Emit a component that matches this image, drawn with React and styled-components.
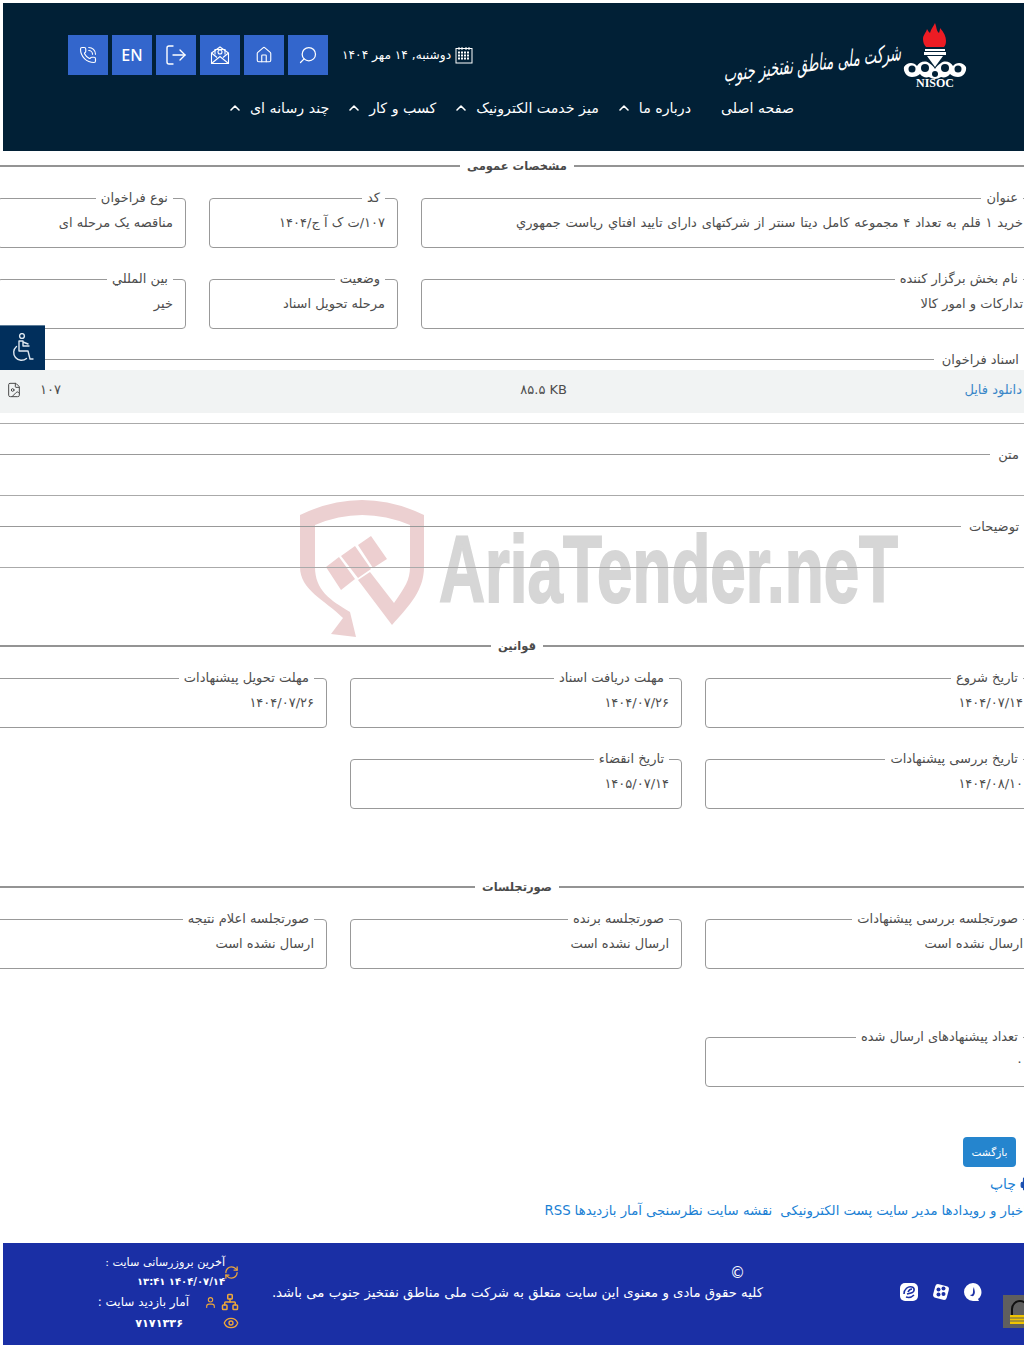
import React from 'react';
import styled, { createGlobalStyle } from 'styled-components';
import {
  ChevronUp,
  Eye,
  FileImage,
  Home,
  LogOut,
  Network,
  PhoneCall,
  Printer,
  RefreshCw,
  Search,
  User
} from 'lucide-react';

const FONT = '"DejaVu Sans", "Noto Sans", sans-serif';
const TEXT = '#4d4d4d';

const GlobalStyle = createGlobalStyle`
  html, body {
    margin: 0;
    padding: 0;
    background: #fff;
    overflow-x: hidden;
  }
  body {
    font-family: ${FONT};
    color: ${TEXT};
  }
  * { box-sizing: border-box; }
`;

const Page = styled.div`
  position: relative;
  width: 1024px;
  height: 1358px;
  padding-top: 3px;
  overflow: hidden;
  direction: rtl;
`;

// ---------- header ----------
const Header = styled.header`
  margin-left: 3px;
  height: 148px;
  background: #012036;
  display: flex;
  flex-direction: column;
`;

const HeaderTop = styled.div`
  height: 83px;
  padding: 20px 57px 0 0;
  display: flex;
  justify-content: space-between;
`;

const Logo = styled.div`
  display: flex;
  align-items: flex-start;
  color: #fff;
`;

const LogoText = styled.span`
  font-family: "DejaVu Sans", sans-serif;
  font-size: 23px;
  font-style: italic;
  line-height: 1;
  margin: 18px 2px 0 0;
  white-space: nowrap;
  display: inline-block;
  width: 178px;
  transform: scaleX(.57) rotate(-4deg);
  transform-origin: right center;
`;

const Tools = styled.div`
  display: flex;
  align-items: flex-start;
  padding: 12px 0 0 65px;
`;

const DateText = styled.div`
  display: flex;
  align-items: center;
  gap: 4px;
  height: 40px;
  margin-left: 14px;
  font-size: 12.2px;
  color: #fff;
  white-space: nowrap;
`;

const ToolButton = styled.a`
  width: 40px;
  height: 40px;
  margin-left: 4px;
  background: #3366cc;
  color: #fff;
  display: flex;
  align-items: center;
  justify-content: center;
  font-size: 16px;
  font-family: "Noto Sans", sans-serif;
  font-weight: 500;
  &:last-child { margin-left: 0; }
`;

const Nav = styled.nav`
  display: flex;
  padding-right: 230px;
  height: 44px;
  align-items: center;
`;

const NavItem = styled.a`
  display: flex;
  align-items: center;
  gap: 7px;
  margin-left: 17px;
  font-size: 14.2px;
  color: #fff;
  white-space: nowrap;
  svg { flex: none; }
  &:first-child { margin-left: 30px; }
`;

// ---------- content ----------
const Main = styled.main`
  position: relative;
  z-index: 1;
  width: 1038px;
  margin-right: -12px;
  padding-top: 7px;
  font-size: 13px;
`;

const SectionTitle = styled.div`
  display: flex;
  align-items: center;
  height: 16px;
  margin-top: ${({ $top }) => $top || 0}px;
  color: #4a4a4a;
  font-size: 11.5px;
  font-weight: 700;
  white-space: nowrap;
  &::before, &::after {
    content: '';
    flex: 1;
    height: 2px;
    background: #949494;
  }
  span { padding: 0 7px; }
`;

const FieldGrid = styled.div`
  display: grid;
  grid-template-columns: ${({ $cols }) => $cols};
  gap: 22px 23px;
  margin-top: ${({ $top }) => $top || 0}px;
`;

const Field = styled.fieldset`
  margin: 0;
  min-width: 0;
  height: 59px;
  padding: 0 12px;
  border: 1px solid #999;
  border-radius: 4px;
  legend {
    margin-right: 0;
    padding: 0 5px;
    font-size: 13px;
    line-height: 18px;
    color: ${TEXT};
    white-space: nowrap;
  }
`;

const FieldValue = styled.div`
  margin-top: 6px;
  font-size: 13px;
  line-height: 20px;
  color: ${TEXT};
  white-space: nowrap;
  word-spacing: ${({ $spread }) => $spread || 0}px;
  direction: ${({ $ltr }) => ($ltr ? 'ltr' : 'rtl')};
  text-align: right;
`;

const LineField = styled.div`
  display: flex;
  align-items: center;
  height: 16px;
  margin-top: ${({ $top }) => $top || 0}px;
  padding-right: 17px;
  color: ${TEXT};
  white-space: nowrap;
  &::after {
    content: '';
    flex: 1;
    height: 1px;
    margin-right: 8px;
    background: #999;
  }
`;

const Rule = styled.div`
  height: 1px;
  margin-top: ${({ $top }) => $top || 0}px;
  background: #aaa;
`;

const DownloadRow = styled.div`
  height: 43px;
  margin-top: 3px;
  padding: 0 14px 4px 0;
  background: #f1f3f3;
  display: grid;
  grid-template-columns: 455px auto 1fr;
  align-items: center;
  color: ${TEXT};
  a { color: #3b87c8; }
`;

const FileSize = styled.span`
  direction: ltr;
`;

const FileCell = styled.div`
  display: flex;
  align-items: center;
  justify-content: flex-end;
  gap: 18px;
  padding-left: 8px;
  color: ${TEXT};
  svg { color: #4a4a4a; }
`;

const BackButton = styled.button`
  display: block;
  width: 53px;
  height: 30px;
  margin: 50px 20px 0 auto;
  padding: 0;
  border: 0;
  border-radius: 4px;
  background: #2585ce;
  color: #fff;
  font-family: ${FONT};
  font-size: 10.5px;
`;

const PrintLink = styled.a`
  display: flex;
  align-items: center;
  gap: 4px;
  height: 18px;
  margin-top: 8px;
  padding-right: 2px;
  color: #1a7fd4;
  font-size: 14px;
  white-space: nowrap;
  svg { color: #1a4fb0; fill: #1a4fb0; }
`;

const LinkRow = styled.div`
  display: flex;
  height: 20px;
  margin-top: 10px;
  padding-right: 9px;
  color: #1a7fd4;
  font-size: 13.3px;
  white-space: nowrap;
  a { margin-left: 4px; }
  a.wide { margin-left: 8px; }
`;

// ---------- footer ----------
const Footer = styled.footer`
  margin: 20px 0 0 3px;
  height: 102px;
  background: #1a2fa5;
  color: #fff;
  display: flex;
  align-items: flex-start;
`;

const Socials = styled.div`
  display: flex;
  gap: 14px;
  padding: 40px 42px 0 0;
  width: 261px;
  flex: none;
`;

const Copyright = styled.div`
  width: 491px;
  flex: none;
  padding-top: 21px;
  font-size: 13.3px;
  line-height: 19px;
  white-space: nowrap;
`;

const CopySign = styled.div`
  margin-right: 18px;
  font-size: 15px;
`;

const Stats = styled.div`
  width: 145px;
  margin-right: 33px;
  padding-top: 10px;
  font-size: 11.2px;
  color: #fff;
  display: flex;
  flex-direction: column;
  svg { color: #eea83a; flex: none; }
`;

const StatRow = styled.div`
  display: flex;
  align-items: center;
  gap: ${({ $gap }) => $gap || 0}px;
  height: ${({ $h }) => $h || 20}px;
  white-space: nowrap;
`;

const StatLines = styled.div`
  margin-right: -1px;
  line-height: 19px;
`;

const StatDate = styled.div`
  direction: ltr;
  text-align: right;
  font-size: 10px;
  font-weight: 700;
`;

const StatNumber = styled.span`
  margin-right: 40px;
  font-weight: 700;
  font-size: 11.2px;
`;

const StatLabel = styled.span`
  margin-right: 11px;
  font-size: 12px;
`;

// ---------- overlays ----------
const AccessWidget = styled.div`
  position: absolute;
  left: 0;
  top: 325px;
  width: 45px;
  height: 45px;
  background: #012f5c;
  border-top: 1px solid #5c7c98;
  color: #dfe8f0;
  display: flex;
  align-items: center;
  justify-content: center;
  z-index: 3;
`;

const LockWidget = styled.div`
  position: absolute;
  left: 1003px;
  top: 1295px;
  width: 40px;
  height: 33px;
  background: #5f5f5f;
  z-index: 3;
`;

const Watermark = styled.svg`
  position: absolute;
  left: 290px;
  top: 495px;
  direction: ltr;
  pointer-events: none;
  z-index: 0;
`;

const NisocMark = () => (
  <svg width="64" height="68" viewBox="0 0 64 68" style={{ flex: 'none' }}>
    <path d="M32 0c2 5 1 7 4 10 1-3 1-4 1-5 4 4 6 9 6 13 0 3-1 5-2 6H23c-2-2-3-5-3-8 0-4 3-6 4-10 1 2 2 3 3 4 1-4 3-6 5-10z" fill="#ed1c24" />
    <rect x="22" y="26" width="20" height="2" fill="#fff" />
    <rect x="21" y="29" width="22" height="3" fill="#fff" />
    <path d="M24 33h16l-8 11z" fill="#fff" />
    <path d="M1 44c3-5 10-5 13-1 2-4 8-6 12-3 3 2 5 4 6 6 1-2 3-4 6-6 4-3 10-1 12 3 3-4 10-4 13 1 1 5-3 10-8 10-3 0-6-1-8-3-2 3-6 4-9 3-2 1-4 2-6 2s-4-1-6-2c-3 1-7 0-9-3-2 2-5 3-8 3-5 0-9-5-8-10z" fill="#fff" />
    <circle cx="9" cy="46" r="3.5" fill="#012036" />
    <circle cx="55" cy="46" r="3.5" fill="#012036" />
    <circle cx="22" cy="45" r="4" fill="#012036" />
    <circle cx="42" cy="45" r="4" fill="#012036" />
    <circle cx="32" cy="51" r="3" fill="#012036" />
    <text x="32" y="64" textAnchor="middle" fill="#fff" fontFamily="Liberation Serif" fontWeight="700" fontSize="12">NISOC</text>
  </svg>
);

const CalendarMark = () => (
  <svg width="18" height="18" viewBox="0 0 18 18" style={{ flex: 'none' }}>
    <rect x="1" y="2.5" width="16" height="14.5" fill="none" stroke="#fff" />
    <path d="M4 1v3M7 1v3M11 1v3M14 1v3" stroke="#fff" />
    <path d="M3 6.5h12M3 9.5h12M3 12.5h12" stroke="#fff" strokeWidth="2" strokeDasharray="2 1" />
  </svg>
);

const MailMark = () => (
  <svg width="20" height="20" viewBox="0 0 20 20" fill="none" stroke="#fff" strokeWidth="1.1">
    <path d="M1.5 8 10 2l8.5 6v10.5h-17z" />
    <path d="M1.5 18.5 10 11.5l8.5 7M1.5 8 7 12.5M18.5 8 13 12.5" />
    <path d="M5 9.5V4.5h10v5" />
    <circle cx="10" cy="7" r="2" />
  </svg>
);

const WheelchairMark = () => (
  <svg width="24" height="30" viewBox="0 0 24 30" fill="none" stroke="currentColor" strokeWidth="1.4" strokeLinecap="round" strokeLinejoin="round">
    <circle cx="11" cy="3" r="2.4" />
    <path d="M8 8h4v5h6M12 9l5 2M8 8v10h9l2 8h3" />
    <path d="M5.5 13.5a7.5 7.5 0 1 0 10 12" />
  </svg>
);

const EitaaIcon = () => (
  <svg width="18" height="18" viewBox="0 0 18 18">
    <rect width="18" height="18" rx="5" fill="#fff" />
    <path d="M4 11c0-5 4-8 8-7 3 1 3 5-1 6l-4 1M6 14c3 1 6 0 8-2M8 9c1-2 2-3 4-3" fill="none" stroke="#1a2fa5" strokeWidth="1.6" />
  </svg>
);

const BaleIcon = () => (
  <svg width="18" height="18" viewBox="0 0 18 18">
    <rect x="2" y="2" width="14" height="14" rx="3" fill="#fff" transform="rotate(15 9 9)" />
    <circle cx="6.5" cy="6.5" r="2" fill="#1a2fa5" />
    <circle cx="11.5" cy="5.5" r="2" fill="#1a2fa5" />
    <circle cx="6.5" cy="11.5" r="2" fill="#1a2fa5" />
    <circle cx="11.5" cy="11" r="2" fill="#1a2fa5" />
  </svg>
);

const SoroushIcon = () => (
  <svg width="18" height="18" viewBox="0 0 18 18">
    <path d="M9 0a9 9 0 1 0 0 18h6l-1-2a9 9 0 0 0-5-16z" fill="#fff" />
    <path d="M10 4c0 3 2 5 0 8-1 2-3 1-4 0 2 0 3-1 3-3s0-3 1-5z" fill="#1a2fa5" />
  </svg>
);

const Chevron = () => <ChevronUp size={16} strokeWidth={2.4} />;

const App = () => (
  <Page>
    <GlobalStyle />
    <Watermark width="620" height="150" viewBox="0 0 620 150">
      <path
        d="M10 20Q72 -10 134 20V72C134 95 120 110 102 130L68 85L80 77L104 108C115 92 120 85 120 72V30Q72 10 25 30V72C25 95 40 105 60 117L66 142L41 139L53 123C35 105 10 95 10 72Z"
        fill="#ecd0d1"
      />
      <path d="M36 72 49 62 65 84 51 95zM51 61 65 51 81 74 68 83zM68 50 81 41 97 64 83 73z" fill="#edcfd0" />
      <text x="149" y="107" fontFamily="Liberation Sans" fontWeight="700" fontSize="95" fill="#d6d6d6" stroke="#d6d6d6" strokeWidth="2" textLength="459" lengthAdjust="spacingAndGlyphs">AriaTender.neT</text>
    </Watermark>

    <Header>
      <HeaderTop>
        <Logo>
          <NisocMark />
          <LogoText>شرکت ملی مناطق نفتخیز جنوب</LogoText>
        </Logo>
        <Tools>
          <DateText>
            <CalendarMark />
            دوشنبه, ۱۴ مهر ۱۴۰۴
          </DateText>
          <ToolButton><Search size={20} strokeWidth={1.5} style={{ transform: 'scaleX(-1)' }} /></ToolButton>
          <ToolButton><Home size={18} strokeWidth={1.5} /></ToolButton>
          <ToolButton><MailMark /></ToolButton>
          <ToolButton><LogOut size={24} strokeWidth={1.4} /></ToolButton>
          <ToolButton>EN</ToolButton>
          <ToolButton><PhoneCall size={18} strokeWidth={1.5} /></ToolButton>
        </Tools>
      </HeaderTop>
      <Nav>
        <NavItem>صفحه اصلی</NavItem>
        <NavItem>درباره ما <Chevron /></NavItem>
        <NavItem>میز خدمت الکترونیک <Chevron /></NavItem>
        <NavItem>کسب و کار <Chevron /></NavItem>
        <NavItem>چند رسانه ای <Chevron /></NavItem>
      </Nav>
    </Header>

    <Main>
      <SectionTitle><span>مشخصات عمومی</span></SectionTitle>
      <FieldGrid $cols="615px 189px 189px" $top={15}>
        <Field>
          <legend>عنوان</legend>
          <FieldValue $spread={0.7}>خرید ۱ قلم به تعداد ۴ مجموعه کامل دیتا سنتر از شرکتهای دارای تایید افتاي ریاست جمهوري</FieldValue>
        </Field>
        <Field>
          <legend>کد</legend>
          <FieldValue>۱۰۷/ت ک آ ج/۱۴۰۴</FieldValue>
        </Field>
        <Field>
          <legend>نوع فراخوان</legend>
          <FieldValue>مناقصه یک مرحله ای</FieldValue>
        </Field>
        <Field>
          <legend>نام بخش برگزار کننده</legend>
          <FieldValue>تدارکات و امور کالا</FieldValue>
        </Field>
        <Field>
          <legend>وضعیت</legend>
          <FieldValue>مرحله تحویل اسناد</FieldValue>
        </Field>
        <Field>
          <legend>بین المللي</legend>
          <FieldValue>خیر</FieldValue>
        </Field>
      </FieldGrid>

      <LineField $top={22}>اسناد فراخوان</LineField>
      <DownloadRow>
        <a>دانلود فایل</a>
        <FileSize>۸۵.۵ KB</FileSize>
        <FileCell><span>۱۰۷</span><FileImage size={16} strokeWidth={1.5} /></FileCell>
      </DownloadRow>
      <Rule $top={10} />
      <LineField $top={22}>متن</LineField>
      <Rule $top={33} />
      <LineField $top={22}>توضیحات</LineField>
      <Rule $top={33} />

      <SectionTitle $top={70}><span>قوانین</span></SectionTitle>
      <FieldGrid $cols="331px 332px 332px" $top={15}>
        <Field>
          <legend>تاریخ شروع</legend>
          <FieldValue $ltr>۱۴۰۴/۰۷/۱۴</FieldValue>
        </Field>
        <Field>
          <legend>مهلت دریافت اسناد</legend>
          <FieldValue $ltr>۱۴۰۴/۰۷/۲۶</FieldValue>
        </Field>
        <Field>
          <legend>مهلت تحویل پیشنهادات</legend>
          <FieldValue $ltr>۱۴۰۴/۰۷/۲۶</FieldValue>
        </Field>
        <Field>
          <legend>تاریخ بررسی پیشنهادات</legend>
          <FieldValue $ltr>۱۴۰۴/۰۸/۱۰</FieldValue>
        </Field>
        <Field>
          <legend>تاریخ انقضاء</legend>
          <FieldValue $ltr>۱۴۰۵/۰۷/۱۴</FieldValue>
        </Field>
      </FieldGrid>

      <SectionTitle $top={70}><span>صورتجلسات</span></SectionTitle>
      <FieldGrid $cols="331px 332px 332px" $top={15}>
        <Field>
          <legend>صورتجلسه بررسی پیشنهادات</legend>
          <FieldValue>ارسال نشده است</FieldValue>
        </Field>
        <Field>
          <legend>صورتجلسه برنده</legend>
          <FieldValue>ارسال نشده است</FieldValue>
        </Field>
        <Field>
          <legend>صورتجلسه اعلام نتیجه</legend>
          <FieldValue>ارسال نشده است</FieldValue>
        </Field>
      </FieldGrid>
      <FieldGrid $cols="331px" $top={59}>
        <Field>
          <legend>تعداد پیشنهادهای ارسال شده</legend>
          <FieldValue>۰</FieldValue>
        </Field>
      </FieldGrid>

      <BackButton>بازگشت</BackButton>
      <PrintLink><Printer size={14} />چاپ</PrintLink>
      <LinkRow>
        <a>اخبار و رویدادها</a><a>مدیر سایت</a><a className="wide">پست الکترونیکی</a>
        <a>نقشه سایت</a><a>نظرسنجی</a><a>آمار بازدیدها</a><a>RSS</a>
      </LinkRow>
    </Main>

    <Footer>
      <Socials>
        <SoroushIcon /><BaleIcon /><EitaaIcon />
      </Socials>
      <Copyright>
        <CopySign>©</CopySign>
        کلیه حقوق مادی و معنوی این سایت متعلق به شرکت ملی مناطق نفتخیز جنوب می باشد.
      </Copyright>
      <Stats>
        <StatRow $h={38}>
          <RefreshCw size={15} strokeWidth={2} />
          <StatLines>
            <div>آخرین بروزرسانی سایت :</div>
            <StatDate>۱۳:۴۱ ۱۴۰۴/۰۷/۱۴</StatDate>
          </StatLines>
        </StatRow>
        <StatRow $h={22} $gap={4}>
          <Network size={18} strokeWidth={2} />
          <User size={13} strokeWidth={2} />
          <StatLabel>آمار بازدید سایت :</StatLabel>
        </StatRow>
        <StatRow $h={20}>
          <Eye size={16} strokeWidth={2} />
          <StatNumber>۷۱۷۱۳۳۶</StatNumber>
        </StatRow>
      </Stats>
    </Footer>

    <AccessWidget><WheelchairMark /></AccessWidget>
    <LockWidget>
      <svg width="40" height="33" viewBox="0 0 40 33">
        <path d="M9 20v-6a8 8 0 0 1 16 0v6" fill="none" stroke="#111" strokeWidth="2" />
        <rect x="7" y="20" width="14" height="9" fill="#f0c400" />
        <path d="M7 23h14M7 26h14" stroke="#5f5f5f" />
      </svg>
    </LockWidget>
  </Page>
);

export default App;
